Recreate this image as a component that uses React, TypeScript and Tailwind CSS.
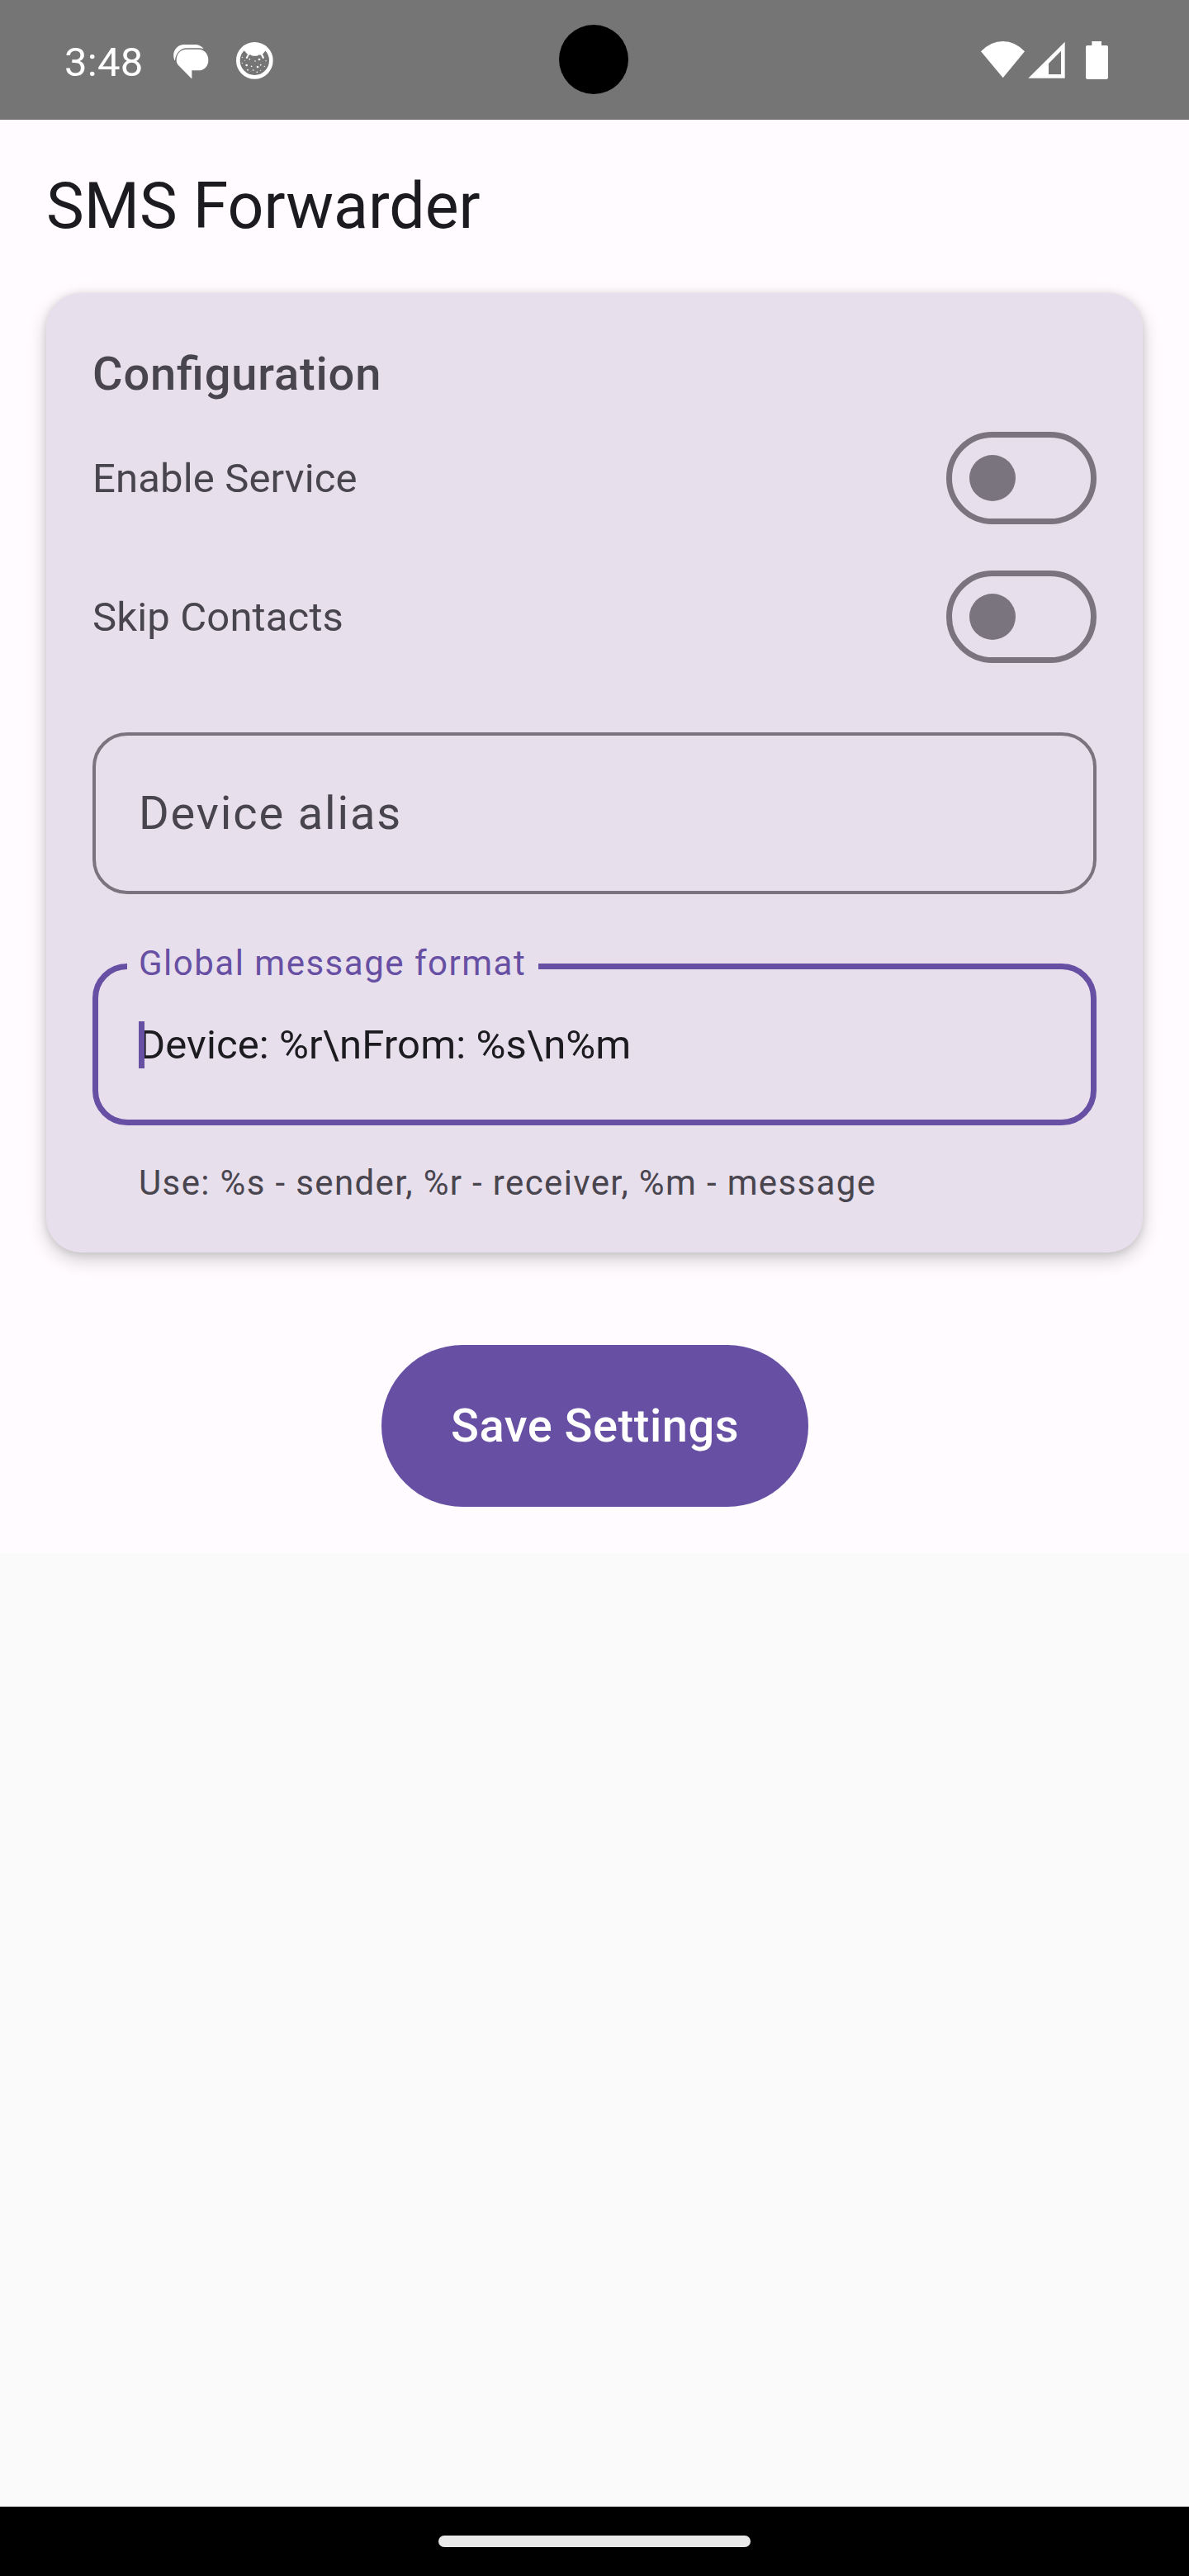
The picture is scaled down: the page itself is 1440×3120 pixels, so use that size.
const dots: [number, number, number][] = [
  [280, 76, 2], [307, 83, 2.5], [327, 90, 2.5], [342, 84, 4], [366, 89, 2], [280, 97, 2],
  [296, 105, 4], [314, 109, 2.5], [336, 111, 4], [347, 104, 2.5], [361, 109, 2],
  [300, 122, 2.5], [320, 123, 2.5], [334, 130, 2.5], [346, 124, 1.5], [289, 88, 1.5],
];

function MessagesIcon() {
  return (
    <svg className="h-11 w-11" viewBox="30 24 132 132" fill="#fff">
      <path d="M96 154 L48 105 C43 99 41 93 41 86 C41 63 56 47 78 47 H121 C143 47 157 64 157 86 C157 108 143 124 121 124 H97 V154Z" />
      <path d="M34 88 C28 70 30 57 38 46 C46 35 56 30 72 30 H106 C122 30 134 36 140 46 C133 43 126 42.500 118 42.500 H78 C57 42.500 39 59 36 86Z" />
    </svg>
  );
}

function CatIcon() {
  return (
    <svg className="h-[46px] w-[45px]" viewBox="258 18 135 138" fill="#fff">
      <circle cx="325" cy="88" r="60" fill="none" stroke="#fff" strokeWidth="14" />
      <path d="M274 66 L287 52 L300 66 L293 78 Q296 84 300 79 L304 68 L310 67 Q313 71 320 71 H332 Q339 71 341 67 L348 68 L353 79 Q358 84 360 77 L354 65 L365 52 L376 66 L366 38 L344 26 H306 L284 38Z" />
      {dots.map(([x, y, r]) => (
        <circle key={`${x}-${y}`} cx={x} cy={y} r={r} />
      ))}
    </svg>
  );
}

function SystemIcons() {
  return (
    <svg className="h-[50px] w-[160px]" viewBox="75 84 480 150" fill="#fff">
      <path d="M164 223 L84 127 Q119 90 164 90 Q208 90 243 127Z" />
      <path fillRule="evenodd" d="M256 224 L389 92 V224Z M330 171 V210 H375 V125Z" />
      <path d="M487 90 H522 V105 H540 Q546 105 546 111 V221 Q546 228 539 228 H472 Q465 228 465 221 V111 Q465 105 471 105 H487Z" />
    </svg>
  );
}

function StatusBar() {
  return (
    <div className="relative flex h-[145px] shrink-0 items-center justify-between bg-[#757575] pr-[95px] pl-[78px]">
      <div className="flex items-center">
        <span className="mt-[6px] w-[132px] text-[49px] leading-[58px] tracking-[0.3px] text-white">3:48</span>
        <span className="mt-[3px]">
          <MessagesIcon />
        </span>
        <span className="ml-8">
          <CatIcon />
        </span>
      </div>
      <SystemIcons />
      <div className="absolute top-[30px] left-[677px] size-[84px] rounded-full bg-black" />
    </div>
  );
}

function SwitchRow({ label }: { label: string }) {
  return (
    <div className="flex h-[168px] items-center justify-between">
      <span className="pt-[2px] text-[49px] leading-[70px] tracking-[0.15px]">{label}</span>
      <button className="flex h-[112px] w-[182px] items-center rounded-full border-[7px] border-[#79747e] pl-[21px]">
        <span className="size-[56px] rounded-full bg-[#79747e]" />
      </button>
    </div>
  );
}

export default function App() {
  return (
    <div className="flex h-[3120px] w-[1440px] flex-col overflow-hidden bg-[#fafafa] font-['Roboto',sans-serif]">
      <StatusBar />
      <main className="flex h-[1736px] shrink-0 flex-col bg-[#fffbff] px-[56px] pt-[56px]">
        <h1 className="h-[98px] text-[77px] leading-[98px] text-[#1c1b1f]">SMS Forwarder</h1>
        <section className="mt-[56px] flex h-[1162px] shrink-0 flex-col rounded-[42px] bg-[#e7dfec] p-[56px] text-[#49454f] shadow-[0_8px_22px_rgba(0,0,0,0.2),0_1px_10px_rgba(0,0,0,0.1)] [&_h2]:shrink-0">
          <h2 className="text-[56px] leading-[84px] font-medium tracking-[0.85px] [font-feature-settings:'liga']">
            Configuration
          </h2>
          <SwitchRow label="Enable Service" />
          <SwitchRow label="Skip Contacts" />
          <div className="mt-[56px] flex h-[196px] items-center rounded-[42px] border-4 border-[#79747e] pl-[52px]">
            <span className="text-[56px] leading-[84px] tracking-[1.85px]">Device alias</span>
          </div>
          <div className="relative mt-[84px] flex h-[196px] items-center rounded-[42px] border-[7px] border-[#6750a3] pl-[49px]">
            <span className="absolute top-[-35px] left-[35px] h-[56px] w-[498px] bg-[#e7dfec] pl-[14px] text-[42px] leading-[56px] tracking-[1.5px] text-[#6750a3]">
              Global message format
            </span>
            <span className="pt-[2px] text-[49px] leading-[70px] tracking-[0.12px] text-[#1c1b1f]">
              {"Device: %r\\nFrom: %s\\n%m"}
            </span>
            <span className="absolute top-[63px] left-[49px] h-[57px] w-[7px] bg-[#6750a3]" />
          </div>
          <p className="mt-[42px] pl-[56px] text-[42px] leading-[56px] tracking-[1.36px]">
            Use: %s - sender, %r - receiver, %m - message
          </p>
        </section>
        <button className="mt-[112px] ml-[406px] h-[196px] w-[517px] shrink-0 rounded-full bg-[#6750a3] text-[56px] leading-[84px] font-medium tracking-[0.52px] text-white">
          Save Settings
        </button>
      </main>
      <footer className="mt-auto flex h-[84px] shrink-0 justify-center bg-black pt-[35px]">
        <div className="h-[14px] w-[378px] rounded-full bg-[#e9e9e9]" />
      </footer>
    </div>
  );
}
